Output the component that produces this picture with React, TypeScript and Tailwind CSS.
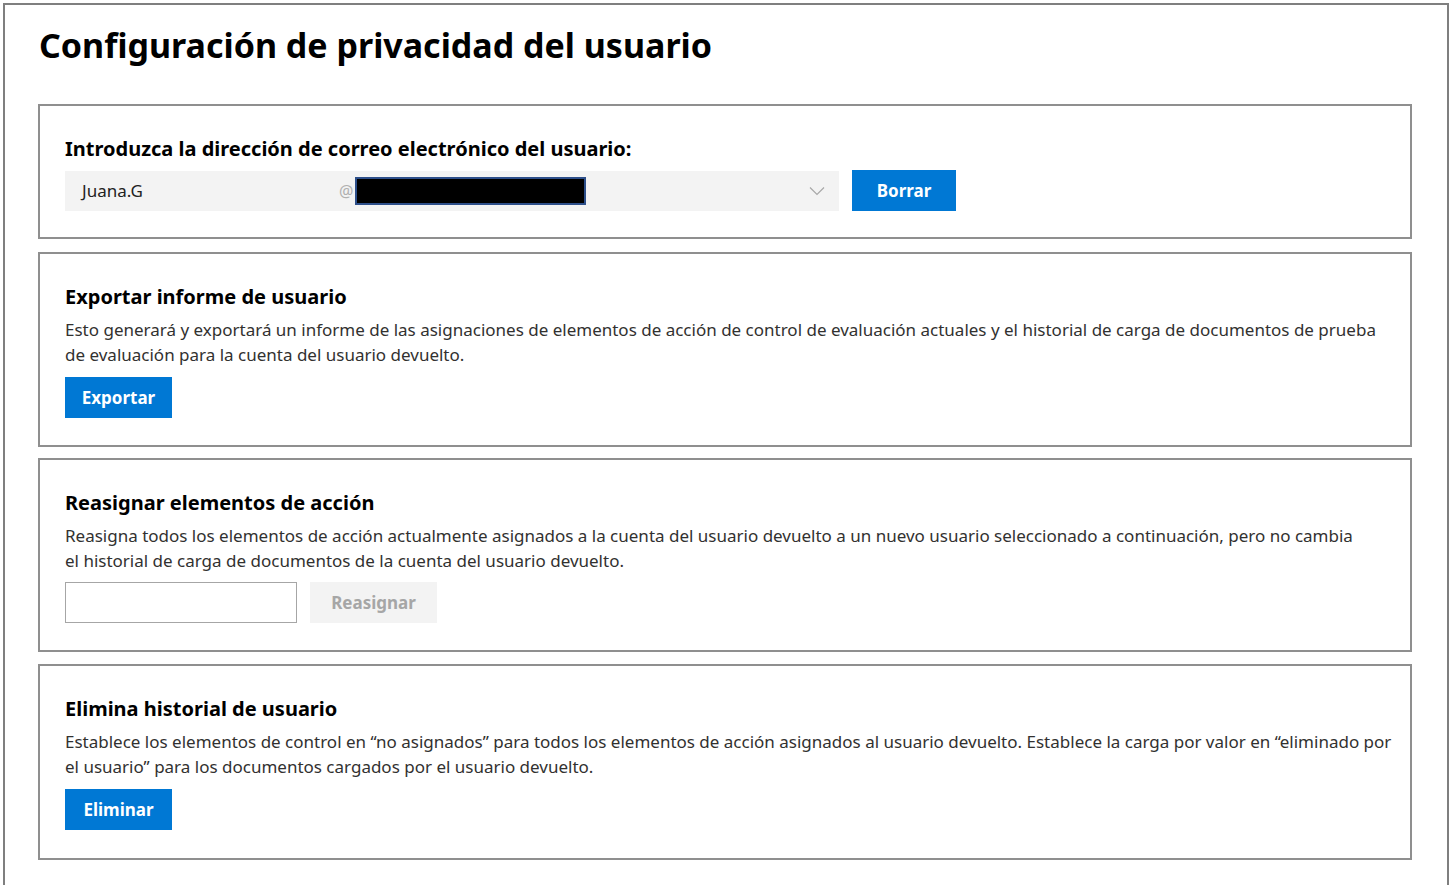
import React from "react";

const font = { fontFamily: '"Noto Sans", "Open Sans", Arial, sans-serif' };

function Card({ children, extra = "pb-[27px]" }: { children: React.ReactNode; extra?: string }) {
  return (
    <section className={`w-[1374px] border-2 border-[#8f8f8f] pl-[25px] pr-[15px] pt-[29px] ${extra}`}>
      {children}
    </section>
  );
}

function Heading({ children }: { children: React.ReactNode }) {
  return <h2 className="text-[20px] leading-[28px] font-bold text-black">{children}</h2>;
}

function Desc({ children }: { children: React.ReactNode }) {
  return <p className="mt-[6px] text-[17px] leading-[25px] text-[#323130]">{children}</p>;
}

function PrimaryButton({ label, width }: { label: string; width: string }) {
  return (
    <button className={`h-[41px] ${width} bg-[#0078d4] text-white text-[17px] font-bold`}>
      {label}
    </button>
  );
}

export default function App() {
  return (
    <div className="min-h-screen bg-white pl-[3px] pr-[3px] pt-[3px]" style={font}>
      <div className="min-h-[882px] border-2 border-b-0 border-[#7f7f7f] pl-[33px] pt-[17px]">
        <h1 className="ml-[1px] text-[34px] leading-[46px] font-bold text-black">
          Configuración de privacidad del usuario
        </h1>

        <div className="mt-[36px] flex flex-col gap-[11px]">
          <Card extra="pb-[26px]">
            <Heading>Introduzca la dirección de correo electrónico del usuario:</Heading>
            <div className="mt-[7px] flex items-center gap-[13px]">
              <div className="flex h-[40px] w-[774px] items-center bg-[#f3f3f3]">
                <span className="ml-[17px] w-[257px] text-[17px] text-[#222]">Juana.G</span>
                <span className="text-[16px] text-[#b0b0b0]">@</span>
                <div className="ml-[2px] h-[28px] w-[231px] border-2 border-[#2d4f8a] bg-black" />
                <div className="flex-1" />
                <svg className="mr-[14px]" width="16" height="10" viewBox="0 0 16 10" fill="none">
                  <path d="M1 1.5 L8 8.5 L15 1.5" stroke="#a8a8a8" strokeWidth="1.2" />
                </svg>
              </div>
              <PrimaryButton label="Borrar" width="w-[104px]" />
            </div>
          </Card>

          <Card extra="mt-[2px] pb-[27px]">
            <Heading>Exportar informe de usuario</Heading>
            <Desc>
              Esto generará y exportará un informe de las asignaciones de elementos de acción de control de evaluación
              actuales y el historial de carga de documentos de prueba de evaluación para la cuenta del usuario devuelto.
            </Desc>
            <div className="mt-[10px]">
              <PrimaryButton label="Exportar" width="w-[107px]" />
            </div>
          </Card>

          <Card>
            <Heading>Reasignar elementos de acción</Heading>
            <Desc>
              Reasigna todos los elementos de acción actualmente asignados a la cuenta del usuario devuelto a un nuevo
              usuario seleccionado a continuación, pero no cambia
              <br />
              el historial de carga de documentos de la cuenta del usuario devuelto.
            </Desc>
            <div className="mt-[9px] flex items-center gap-[13px]">
              <input className="h-[41px] w-[232px] border border-[#a6a6a6] bg-white px-2 outline-none" />
              <button className="h-[41px] w-[127px] bg-[#f3f3f3] text-[17px] font-bold text-[#a6a6a6]">
                Reasignar
              </button>
            </div>
          </Card>

          <Card extra="mt-[1px] pb-[28px]">
            <Heading>Elimina historial de usuario</Heading>
            <Desc>
              Establece los elementos de control en “no asignados” para todos los elementos de acción asignados al
              usuario devuelto. Establece la carga por valor en “eliminado por el usuario” para los documentos cargados
              por el usuario devuelto.
            </Desc>
            <div className="mt-[10px]">
              <PrimaryButton label="Eliminar" width="w-[107px]" />
            </div>
          </Card>
        </div>
      </div>
    </div>
  );
}
